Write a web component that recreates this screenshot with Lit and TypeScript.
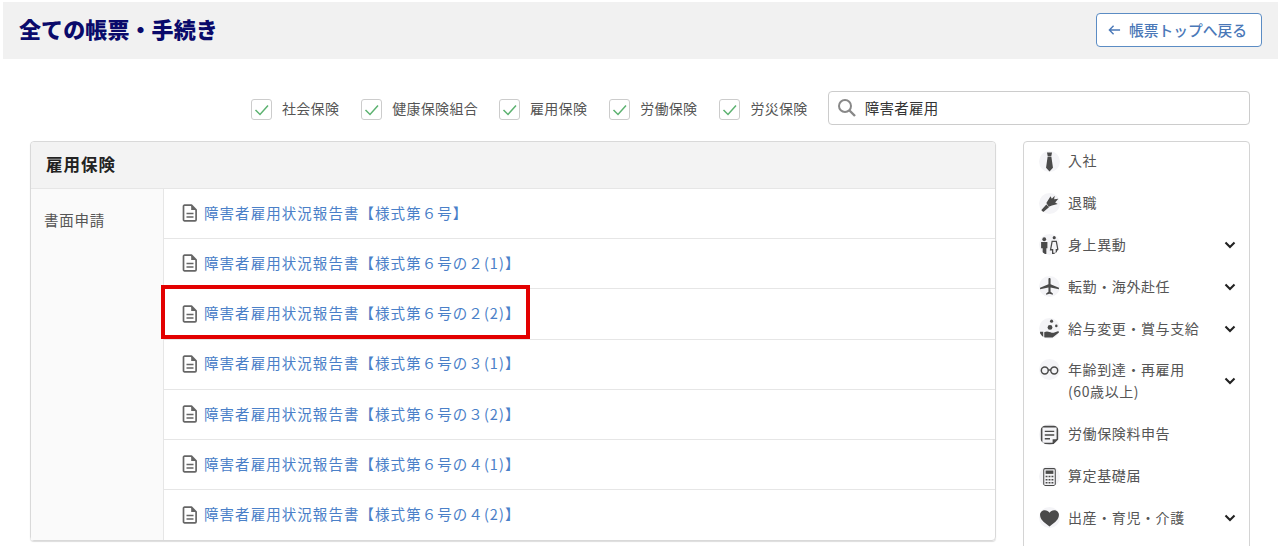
import { LitElement, html, css, svg } from "lit";
import { customElement } from "lit/decorators.js";

const doc = html`<svg class="doc" viewBox="0 0 16 18" width="16" height="18"><path d="M2.5 1.2h7l4.6 4.6v10a1 1 0 0 1-1 1H2.5a1 1 0 0 1-1-1V2.2a1 1 0 0 1 1-1z" fill="none" stroke="#666" stroke-width="1.7" stroke-linejoin="round"/><path d="M9.2 1.2v4.9h4.9z" fill="#666"/><path d="M4.5 9.6h7M4.5 13h7" stroke="#666" stroke-width="1.5"/></svg>`;
const chev = html`<svg class="chev" viewBox="0 0 12 8" width="12" height="8"><path d="M1.5 1.5 6 6l4.5-4.5" fill="none" stroke="#222" stroke-width="2.1"/></svg>`;
const check = svg`<path d="M4.5 11 9 15.5 17 6.5" fill="none" stroke="#5cb270" stroke-width="1.5"/>`;
const I = "#4a4a4a";
const icons: Record<string, unknown> = {
  tie: svg`<path d="M7.6 1.5h4.8l-.7 3.4H8.3z M8.2 5.5h3.6l1.5 10.5-3.3 3.5L6.7 16z" fill="${I}"/>`,
  bouquet: svg`<path d="M1 17.5 7 11l2.5 2.5L3 19z M7 9.5 11 3l1.2 2.5L15 2.5l-.6 3.5 4-.6-3 3.6 2.4 1.4-5.5 1.5-3 1.3z" fill="${I}"/>`,
  people: svg`<circle cx="5" cy="5" r="1.8" fill="${I}"/><path d="M2 7.5h6v6H7V19H3.5v-5.5H2z" fill="${I}"/><circle cx="14.5" cy="3.5" r="1.5" fill="${I}"/><path d="M12.5 7h4l1.5 8h-1.500v3.500h-3.500V15H11z" fill="none" stroke="${I}" stroke-width="1.2"/>`,
  plane: svg`<path d="M9 2.8c0-1.2 2-1.2 2 0v5l8 3.4v1.500l-8-1.700v4l2.200 1.600v1.200L10 17l-3.200.8v-1.200L9 15v-4L1 12.700v-1.500l8-3.400z" fill="${I}"/>`,
  coins: svg`<circle cx="12" cy="3" r="1.5" fill="${I}"/><circle cx="16.5" cy="7.5" r="1.2" fill="${I}"/><circle cx="10.5" cy="9" r="2.3" fill="${I}"/><path d="M1 13h3v6H1z M5 13.5c3-1.5 5 0 7 .5h2l4-1.500c1.300 0 1.300 1 .7 1.500L13 18.500H5z" fill="${I}"/>`,
  glasses: svg`<circle cx="5.5" cy="11" r="3.3" fill="none" stroke="${I}" stroke-width="1.4"/><circle cx="14.5" cy="11" r="3.3" fill="none" stroke="${I}" stroke-width="1.4"/><path d="M8.800 10.500h2.400" stroke="${I}" stroke-width="1.4"/>`,
  form: svg`<path d="M2.5 2.500h15v12l-4 4h-11z" fill="none" stroke="${I}" stroke-width="1.5"/><path d="M5.500 7h9M5.500 10.500h9M5.500 14h5" stroke="${I}" stroke-width="1.3"/><path d="M13 18.500v-4h4.500z" fill="${I}"/>`,
  calc: svg`<rect x="4.5" y="2.5" width="11" height="16" rx="1.2" fill="none" stroke="${I}" stroke-width="1"/><rect x="6.3" y="4.3" width="7.4" height="3.2" fill="${I}"/><path d="M6.300 10h1.800M9.100 10h1.800M11.900 10h1.800M6.300 13h1.800M9.100 13h1.800M11.900 13h1.800M6.300 16h1.800M9.100 16h1.800M11.900 16h1.800" stroke="${I}" stroke-width="1.4"/>`,
  heart: svg`<path d="M10 18.500C4 14.500 1 11.500 1 7.500 1 4.500 3.200 3 5.500 3 7.500 3 9 4 10 5.500 11 4 12.500 3 14.500 3 16.800 3 19 4.500 19 7.500c0 4-3 7-9 11z" fill="${I}"/>`,
};
const menu: { icon: string; label: unknown; more?: boolean; tall?: boolean }[] = [
  { icon: "tie", label: "入社" },
  { icon: "bouquet", label: "退職" },
  { icon: "people", label: "身上異動", more: true },
  { icon: "plane", label: "転勤・海外赴任", more: true },
  { icon: "coins", label: "給与変更・賞与支給", more: true },
  { icon: "glasses", label: html`年齢到達・再雇用<br />(60歳以上)`, more: true, tall: true },
  { icon: "form", label: "労働保険料申告" },
  { icon: "calc", label: "算定基礎届" },
  { icon: "heart", label: "出産・育児・介護", more: true },
];
const forms = ["【様式第６号】", "【様式第６号の２(1)】", "【様式第６号の２(2)】", "【様式第６号の３(1)】", "【様式第６号の３(2)】", "【様式第６号の４(1)】", "【様式第６号の４(2)】"];
const filters = ["社会保険", "健康保険組合", "雇用保険", "労働保険", "労災保険"];

@customElement("app-root")
export class AppRoot extends LitElement {
  static styles = css`
    :host { display: block; height: 546px; overflow: hidden; background: #fff; color: #444; font-family: "Noto Sans CJK JP", "Noto Sans", sans-serif; font-size: 14px; }
    .head { margin: 2px 2px 0 3px; height: 57px; background: #f1f1f1; display: flex; align-items: center; justify-content: space-between; padding: 0 16px; box-sizing: border-box; }
    h1 { margin: 0; font-size: 22px; font-weight: 900; color: #0a0a6b; letter-spacing: .1px; line-height: 1; position: relative; top: -3px; }
    .back { width: 166px; height: 34px; box-sizing: border-box; position: relative; top: -1px; border: 1px solid #5b8cc4; border-radius: 4px; background: #fff; color: #4a78b8; font-size: 14.75px; font-weight: 500; display: flex; align-items: center; padding-left: 11px; gap: 8px; white-space: nowrap; }
    .filters { display: flex; align-items: center; height: 34px; margin-top: 32px; padding: 0 30px 0 251px; }
    .box { width: 21px; height: 21px; flex: none; box-sizing: border-box; border: 1px solid #ccc; border-radius: 3px; margin-right: 10px; display: block; position: relative; top: 1px; }
    .box svg { display: block; margin: -1px; }
    .flabel { margin-right: 22px; font-size: 14px; letter-spacing: .3px; color: #555; white-space: nowrap; }
    .flabel.wide { margin-right: 21px; }
    .search { flex: 1; height: 34px; box-sizing: border-box; margin-left: -2px; border: 1px solid #ccc; border-radius: 4px; display: flex; align-items: center; padding-left: 8px; gap: 8px; color: #333; font-size: 14.5px; letter-spacing: .3px; }
    .search span { position: relative; top: -1px; }
    .main { display: flex; gap: 27px; padding: 0 30px; margin-top: 16px; align-items: flex-start; }
    .table { flex: 1; height: 399.6px; box-sizing: border-box; border: 1px solid #d9d9d9; border-radius: 4px; display: flex; flex-direction: column; box-shadow: 0 1px 1px #ddd; }
    .thead { height: 47px; flex: none; background: #f3f3f3; border-bottom: 1px solid #e6e6e6; display: flex; align-items: center; padding: 0 0 3px 15px; font-weight: 700; font-size: 16.5px; color: #222; letter-spacing: 1px; box-sizing: border-box; border-radius: 4px 4px 0 0; }
    .tbody { flex: 1; display: flex; min-height: 0; }
    .cat { width: 133px; flex: none; background: #fafafa; border-right: 1px solid #e6e6e6; padding: 21px 0 0 13px; box-sizing: border-box; font-size: 14.5px; letter-spacing: .75px; color: #555; line-height: 20px; }
    .rows { flex: 1; display: flex; flex-direction: column; }
    .row { flex: 1; display: flex; align-items: center; padding: 0 0 3px 18px; gap: 6px; border-bottom: 1px solid #e6e6e6; position: relative; color: #4a80c8; font-size: 14.5px; letter-spacing: 1.05px; white-space: nowrap; }
    .row:last-child { border-bottom: 0; }
    .doc { flex: none; position: relative; top: 1px; }
    .mark { position: absolute; left: -3px; top: -4px; width: 369px; height: 54px; box-sizing: border-box; border: 4px solid #e30000; }
    .side { width: 227px; height: 500px; flex: none; box-sizing: border-box; border: 1px solid #d4d4d4; border-radius: 4px; }
    .item { height: 41.8px; display: flex; align-items: center; padding: 0 13px 0 15px; color: #555; font-size: 14px; letter-spacing: .6px; line-height: 22px; position: relative; top: -1.5px; }
    .item.tall { height: 64px; }
    .item.tall .ic { align-self: flex-start; margin-top: 10px; }
    .ic { width: 21px; height: 21px; flex: none; border-radius: 50%; background: #f4f4f7; margin-right: 8px; display: block; }
    .txt { flex: 1; position: relative; top: -1px; }
    .chev { flex: none; }
  `;

  render() {
    return html`
      <div class="head">
        <h1>全ての帳票・手続き</h1>
        <div class="back">
          <svg viewBox="0 0 14 12" width="13" height="12"><path d="M6 1.500 1.500 6 6 10.500M1.500 6H13" fill="none" stroke="#4a78b8" stroke-width="1.500"/></svg>
          帳票トップへ戻る
        </div>
      </div>
      <div class="filters">
        ${filters.map((f) => html`<span class="box"><svg viewBox="0 0 21 21" width="21" height="21">${check}</svg></span><span class="flabel ${f.length > 4 ? "wide" : ""}">${f}</span>`)}
        <div class="search">
          <svg viewBox="0 0 20 20" width="20" height="20"><circle cx="8" cy="8" r="6" fill="none" stroke="#888" stroke-width="2"/><path d="M12.500 12.500 18 18" stroke="#888" stroke-width="2.400"/></svg>
          <span>障害者雇用</span>
        </div>
      </div>
      <div class="main">
        <div class="table">
          <div class="thead">雇用保険</div>
          <div class="tbody">
            <div class="cat">書面申請</div>
            <div class="rows">
              ${forms.map((f, i) => html`<div class="row">${doc}<span>障害者雇用状況報告書${f}</span>${i === 2 ? html`<div class="mark"></div>` : ""}</div>`)}
            </div>
          </div>
        </div>
        <div class="side">
          ${menu.map((m) => html`<div class="item ${m.tall ? "tall" : ""}">
            <svg class="ic" viewBox="0 0 20 20">${icons[m.icon]}</svg>
            <span class="txt">${m.label}</span>
            ${m.more ? chev : ""}
          </div>`)}
        </div>
      </div>
    `;
  }
}
